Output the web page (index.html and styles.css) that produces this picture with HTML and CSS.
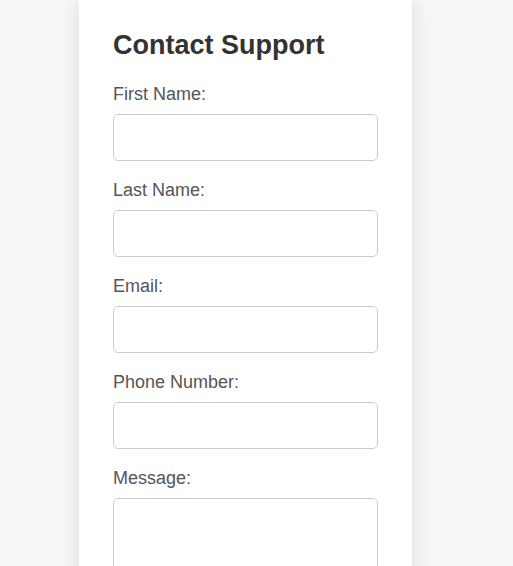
FILE: index.html
```html
<!DOCTYPE html>
<html lang="en">
<head>
<meta charset="utf-8">
<title>Contact Support</title>
<link rel="stylesheet" href="styles.css">
</head>
<body>
<div class="card">
  <h2 class="title">Contact Support</h2>
  <form class="form">
    <label class="label" for="first">First Name:</label>
    <input class="field" id="first" type="text">
    <label class="label" for="last">Last Name:</label>
    <input class="field" id="last" type="text">
    <label class="label" for="email">Email:</label>
    <input class="field" id="email" type="email">
    <label class="label" for="phone">Phone Number:</label>
    <input class="field" id="phone" type="tel">
    <label class="label" for="msg">Message:</label>
    <textarea class="field area" id="msg"></textarea>
  </form>
</div>
</body>
</html>
```
FILE: styles.css
```css
html, body {
  margin: 0;
  padding: 0;
  background: #f7f7f7;
  font-family: "Liberation Sans", Arial, sans-serif;
  overflow: hidden;
}
.card {
  width: 333px;
  box-sizing: border-box;
  margin-left: 79px;
  background: #fff;
  padding: 30px 34px 40px;
  box-shadow: 0 0 20px rgba(0, 0, 0, 0.12);
  min-height: 700px;
}
.title {
  margin: 0 0 23px;
  font-size: 27px;
  font-weight: bold;
  color: #333;
}
.form {
  display: flex;
  flex-direction: column;
}
.label {
  font-size: 18px;
  line-height: 21px;
  color: #555;
  margin-bottom: 9px;
}
.field {
  box-sizing: border-box;
  width: 265px;
  height: 47px;
  border: 1px solid #ccc;
  border-radius: 5px;
  margin: 0 0 19px;
  padding: 10px;
  font-family: inherit;
  font-size: 16px;
  background: #fff;
}
.area {
  height: 120px;
  resize: none;
}
```
